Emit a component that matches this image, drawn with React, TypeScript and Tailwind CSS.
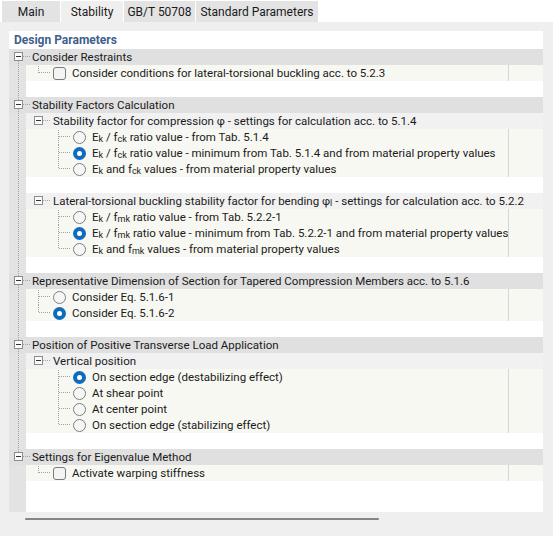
import type { ReactNode } from 'react';

type Row =
  | { t: 'title' }
  | { t: 'blank' }
  | { t: 'h0'; label: string; first?: boolean; last?: boolean }
  | { t: 'h1'; label: ReactNode }
  | { t: 'item'; lvl: 1 | 2; ctl: 'check' | 'radio'; label: ReactNode; checked?: boolean; first?: boolean; last?: boolean };

const Sub = ({ children }: { children: ReactNode }) => (
  <span className="relative top-px text-[9px]">{children}</span>
);

const Ek = () => (
  <>
    E<Sub>k</Sub>
  </>
);

const tabs = ['Main', 'Stability', 'GB/T 50708', 'Standard Parameters'];
const tabWidths = ['w-[58px]', 'w-[62px]', 'w-[71px]', 'w-[122px]'];

const rows: Row[] = [
  { t: 'title' },
  { t: 'h0', label: 'Consider Restraints', first: true },
  { t: 'item', lvl: 1, ctl: 'check', label: 'Consider conditions for lateral-torsional buckling acc. to 5.2.3', first: true, last: true },
  { t: 'blank' },
  { t: 'h0', label: 'Stability Factors Calculation' },
  { t: 'h1', label: 'Stability factor for compression φ - settings for calculation acc. to 5.1.4' },
  { t: 'item', lvl: 2, ctl: 'radio', first: true, label: <><Ek /> / f<Sub>ck</Sub> ratio value - from Tab. 5.1.4</> },
  { t: 'item', lvl: 2, ctl: 'radio', checked: true, label: <><Ek /> / f<Sub>ck</Sub> ratio value - minimum from Tab. 5.1.4 and from material property values</> },
  { t: 'item', lvl: 2, ctl: 'radio', last: true, label: <><Ek /> and f<Sub>ck</Sub> values - from material property values</> },
  { t: 'blank' },
  { t: 'h1', label: <>Lateral-torsional buckling stability factor for bending φ<Sub>l</Sub> - settings for calculation acc. to 5.2.2</> },
  { t: 'item', lvl: 2, ctl: 'radio', first: true, label: <><Ek /> / f<Sub>mk</Sub> ratio value - from Tab. 5.2.2-1</> },
  { t: 'item', lvl: 2, ctl: 'radio', checked: true, label: <><Ek /> / f<Sub>mk</Sub> ratio value - minimum from Tab. 5.2.2-1 and from material property values</> },
  { t: 'item', lvl: 2, ctl: 'radio', last: true, label: <><Ek /> and f<Sub>mk</Sub> values - from material property values</> },
  { t: 'blank' },
  { t: 'h0', label: 'Representative Dimension of Section for Tapered Compression Members acc. to 5.1.6' },
  { t: 'item', lvl: 1, ctl: 'radio', first: true, label: 'Consider Eq. 5.1.6-1' },
  { t: 'item', lvl: 1, ctl: 'radio', checked: true, last: true, label: 'Consider Eq. 5.1.6-2' },
  { t: 'blank' },
  { t: 'h0', label: 'Position of Positive Transverse Load Application' },
  { t: 'h1', label: 'Vertical position' },
  { t: 'item', lvl: 2, ctl: 'radio', checked: true, first: true, label: 'On section edge (destabilizing effect)' },
  { t: 'item', lvl: 2, ctl: 'radio', label: 'At shear point' },
  { t: 'item', lvl: 2, ctl: 'radio', label: 'At center point' },
  { t: 'item', lvl: 2, ctl: 'radio', last: true, label: 'On section edge (stabilizing effect)' },
  { t: 'blank' },
  { t: 'h0', label: 'Settings for Eigenvalue Method', last: true },
  { t: 'item', lvl: 1, ctl: 'check', first: true, last: true, label: 'Activate warping stiffness' },
];

const DOT = '#a3a3a3';

// dotted segment helpers, local coords inside the tree column
const VLine = ({ x, y1, y2 }: { x: number; y1: number; y2: number }) => (
  <line x1={x + 0.5} x2={x + 0.5} y1={y1} y2={y2} stroke={DOT} strokeDasharray="1 1" />
);
const HLine = ({ y, x1, x2 }: { y: number; x1: number; x2: number }) => (
  <line x1={x1} x2={x2} y1={y + 0.5} y2={y + 0.5} stroke={DOT} strokeDasharray="1 1" />
);

function MinusBox({ x }: { x: number }) {
  return (
    <g shapeRendering="crispEdges">
      <rect x={x + 0.5} y={3.5} width={8} height={8} fill="#fafafa" stroke="#8c8c8c" />
      <line x1={x + 2} x2={x + 7} y1={7.5} y2={7.5} stroke="#333" />
    </g>
  );
}

function Control({ kind, checked }: { kind: 'check' | 'radio'; checked?: boolean }) {
  if (kind === 'check') {
    return <span className="block h-[13px] w-[13px] shrink-0 rounded-[3px] border border-[#7a7a7a] bg-[#f4f4f4]" />;
  }
  if (checked) {
    return (
      <span className="flex h-[13px] w-[13px] shrink-0 items-center justify-center rounded-full bg-[#0f6cbd]">
        <span className="h-[5px] w-[5px] rounded-full bg-white" />
      </span>
    );
  }
  return <span className="block h-[13px] w-[13px] shrink-0 rounded-full border border-[#7f7f7f] bg-[#f6f6f6]" />;
}

function TreeRow({ row, rootLine }: { row: Row; rootLine: boolean }) {
  if (row.t === 'title') {
    return (
      <div className="flex h-[18px] items-center bg-white pl-[5px] text-[12px] font-bold text-[#3f5f8e]">Design Parameters</div>
    );
  }

  const lines: ReactNode[] = [];
  if (row.t === 'h0') {
    if (!row.first) lines.push(<VLine key="a" x={9} y1={0} y2={3} />);
    if (!row.last) lines.push(<VLine key="b" x={9} y1={12} y2={16} />);
    lines.push(<HLine key="c" y={7} x1={14} x2={21} />);
  } else if (rootLine) {
    lines.push(<VLine key="r" x={9} y1={0} y2={16} />);
  }
  if (row.t === 'h1') {
    lines.push(<HLine key="h" y={7} x1={34} x2={41} />);
  }
  if (row.t === 'item') {
    const vx = row.lvl === 1 ? 29 : 49;
    lines.push(<VLine key="v" x={vx} y1={row.first ? 1 : 0} y2={row.last ? 8 : 16} />);
    lines.push(<HLine key="hh" y={7} x1={vx + 1} x2={vx + 12} />);
  }

  const svg = (
    <svg className="pointer-events-none absolute left-0 top-0" width={80} height={16}>
      {lines}
      {row.t === 'h0' && <MinusBox x={5} />}
      {row.t === 'h1' && <MinusBox x={25} />}
    </svg>
  );

  if (row.t === 'h0') {
    return (
      <div className="relative flex h-4 items-center bg-[#e0e0e0] pl-[23px]">
        {svg}
        <span className="whitespace-nowrap">{row.label}</span>
      </div>
    );
  }

  return (
    <div className="relative flex h-4">
      <div className="w-[17px] shrink-0 bg-[#e3e3e3]" />
      {row.t === 'blank' && <div className="flex-1 bg-white" />}
      {row.t === 'h1' && (
        <div className="flex min-w-0 flex-1 items-center bg-[#f1f1f1] pl-[27px]">
          <span className="whitespace-nowrap">{row.label}</span>
        </div>
      )}
      {row.t === 'item' && (
        <div className="flex min-w-0 flex-1 bg-[#f8f8f3]">
          <div className={`flex min-w-0 flex-1 items-center gap-[6px] ${row.lvl === 1 ? 'pl-[27px]' : 'pl-[47px]'}`}>
            <Control kind={row.ctl} checked={row.checked} />
            <span className="whitespace-nowrap">{row.label}</span>
          </div>
          <div className="w-[35px] shrink-0 border-l border-[#d6d6d6]" />
        </div>
      )}
      {svg}
    </div>
  );
}

export default function App() {
  // the root connector runs down every row until the last section begins
  const lastRoot = rows.findIndex(r => r.t === 'h0' && r.last);

  return (
    <div
      className="h-[536px] w-[553px] overflow-hidden bg-white text-[11.5px] leading-4 text-[#1a1a1a]"
      style={{ fontFamily: 'Roboto, "Segoe UI", sans-serif' }}
    >
      {/* Tabs */}
      <div className="flex h-[22px] gap-px pl-[2px] pt-px text-[12px]">
        {tabs.map((tab, i) => (
          <div
            key={tab}
            className={`${tabWidths[i]} flex items-center justify-center whitespace-nowrap ${i === 1 ? 'bg-[#efefef]' : 'bg-[#e3e3e3]'}`}
          >
            {tab}
          </div>
        ))}
      </div>

      {/* Panel */}
      <div className="flex h-[514px] flex-col bg-[#efefef] pl-[9px] pr-[10px] pt-[9px]">
        <div className="flex h-[481px] flex-col bg-white">
          {rows.map((row, i) => (
            <TreeRow key={i} row={row} rootLine={i < lastRoot} />
          ))}
          <div className="flex flex-1">
            <div className="w-[17px] bg-[#e3e3e3]" />
            <div className="flex-1 bg-white" />
          </div>
        </div>
        {/* horizontal scrollbar */}
        <div className="flex h-6 items-start pl-[16px] pt-[6px]">
          <div className="h-[2px] w-[354px] rounded-full bg-[#858585]" />
        </div>
      </div>
    </div>
  );
}
